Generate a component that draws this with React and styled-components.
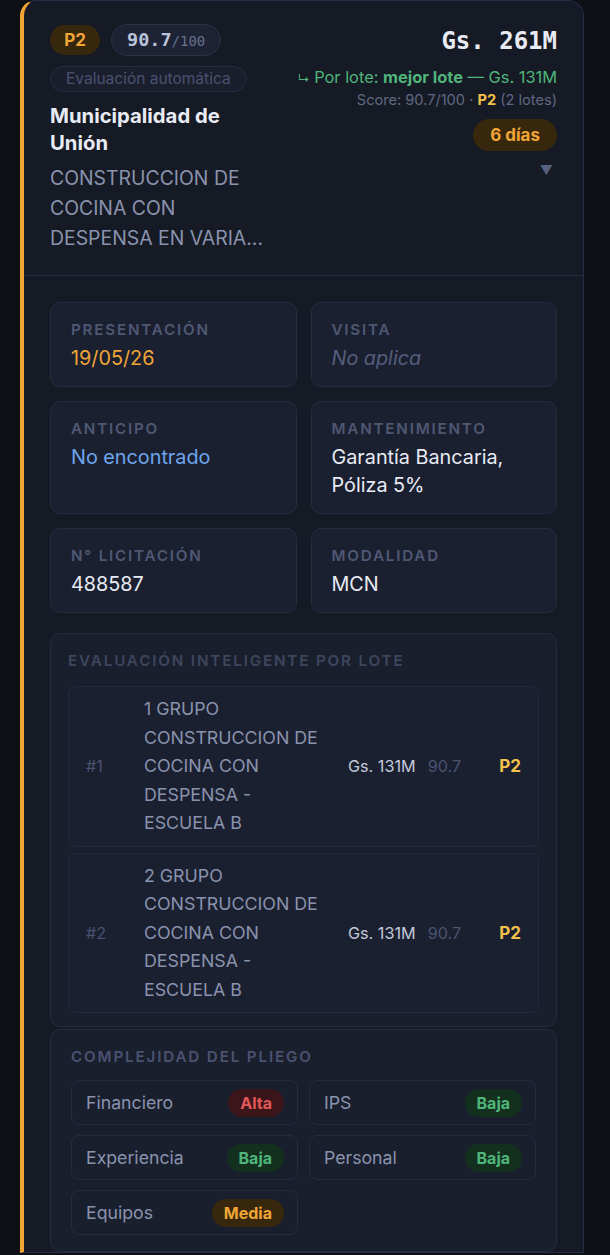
import React from "react";
import styled, { createGlobalStyle } from "styled-components";

const colors = {
  page: "#0f1015",
  card: "#161a25",
  cardBorder: "#262e45",
  box: "#1b2031",
  boxBorder: "#252c40",
  amber: "#f0a535",
  amberBg: "#36270d",
  gold: "#f2c14a",
  green: "#4fb57a",
  greenBg: "#13301f",
  red: "#e25858",
  redBg: "#3a1519",
  blue: "#6ea6ee",
  white: "#e8ebf3",
  text: "#8a93ad",
  muted: "#5f6882",
  dim: "#4a5270",
  faint: "#3e465e",
};

const GlobalStyle = createGlobalStyle`
  body {
    margin: 0;
    background: ${colors.page};
    font-family: Inter, "Noto Sans", sans-serif;
    -webkit-font-smoothing: antialiased;
  }
`;

const details = [
  { label: "Presentación", value: "19/05/26", tone: "amber" },
  { label: "Visita", value: "No aplica", tone: "muted" },
  { label: "Anticipo", value: "No encontrado", tone: "blue" },
  { label: "Mantenimiento", value: "Garantía Bancaria, Póliza 5%" },
  { label: "N° Licitación", value: "488587" },
  { label: "Modalidad", value: "MCN" },
];

const lotes = [
  { n: 1, name: "1 GRUPO CONSTRUCCION DE COCINA CON DESPENSA - ESCUELA B" },
  { n: 2, name: "2 GRUPO CONSTRUCCION DE COCINA CON DESPENSA - ESCUELA B" },
];

const complejidad = [
  { label: "Financiero", level: "Alta" },
  { label: "IPS", level: "Baja" },
  { label: "Experiencia", level: "Baja" },
  { label: "Personal", level: "Baja" },
  { label: "Equipos", level: "Media" },
];

export default function App() {
  return (
    <>
      <GlobalStyle />
      <Card>
        <Header>
          <HeaderLeft>
            <PillRow>
              <PriorityPill>P2</PriorityPill>
              <ScorePill>
                <ScoreValue>90.7</ScoreValue>
                <ScoreMax>/100</ScoreMax>
              </ScorePill>
            </PillRow>
            <AutoPill>Evaluación automática</AutoPill>
            <Entity>Municipalidad de Unión</Entity>
            <Description>CONSTRUCCION DE COCINA CON DESPENSA EN VARIA...</Description>
          </HeaderLeft>
          <HeaderRight>
            <Amount>Gs. 261M</Amount>
            <LoteLine>
              <Arrow>↳</Arrow> Por lote: <strong>mejor lote</strong> — Gs. 131M
            </LoteLine>
            <ScoreLine>
              Score: 90.7/100 · <b>P2</b> (2 lotes)
            </ScoreLine>
            <DaysPill>6 días</DaysPill>
            <Caret>▼</Caret>
          </HeaderRight>
        </Header>

        <Body>
          <DetailGrid>
            {details.map((d) => (
              <DetailBox key={d.label}>
                <Label>{d.label}</Label>
                <Value $tone={d.tone}>{d.value}</Value>
              </DetailBox>
            ))}
          </DetailGrid>

          <LoteSection>
            <SectionTitle $dim>Evaluación inteligente por lote</SectionTitle>
            <LoteList>
              {lotes.map((l) => (
                <LoteRow key={l.n}>
                  <LoteIndex>#{l.n}</LoteIndex>
                  <LoteName>{l.name}</LoteName>
                  <LoteAmount>Gs. 131M</LoteAmount>
                  <LoteScore>90.7</LoteScore>
                  <LotePriority>P2</LotePriority>
                </LoteRow>
              ))}
            </LoteList>
          </LoteSection>

          <ComplexSection>
            <SectionTitle>Complejidad del pliego</SectionTitle>
            <ComplexGrid>
              {complejidad.map((c) => (
                <ComplexItem key={c.label}>
                  <span>{c.label}</span>
                  <LevelBadge $level={c.level}>{c.level}</LevelBadge>
                </ComplexItem>
              ))}
            </ComplexGrid>
          </ComplexSection>
        </Body>
      </Card>
    </>
  );
}

const Card = styled.div`
  margin-left: 20px;
  width: 559px;
  background: ${colors.card};
  border: 1px solid ${colors.cardBorder};
  border-left: 4px solid ${colors.amber};
  border-radius: 16px 16px 0 0;
  overflow: hidden;
`;

const Header = styled.section`
  display: flex;
  justify-content: space-between;
  gap: 16px;
  padding: 23px 26px 22px 26px;
  border-bottom: 1px solid ${colors.cardBorder};
`;

const HeaderLeft = styled.div`
  display: flex;
  flex-direction: column;
  align-items: flex-start;
  width: 218px;
`;

const PillRow = styled.div`
  display: flex;
  align-items: center;
  gap: 11px;
`;

const PriorityPill = styled.span`
  display: inline-flex;
  align-items: center;
  justify-content: center;
  width: 50px;
  height: 30px;
  border-radius: 15px;
  background: ${colors.amberBg};
  color: ${colors.amber};
  font-weight: 700;
  font-size: 17px;
`;

const ScorePill = styled.span`
  display: inline-flex;
  align-items: baseline;
  height: 30px;
  line-height: 30px;
  padding: 0 15px;
  border-radius: 16px;
  background: #1d2334;
  border: 1px solid #293147;
  font-family: "DejaVu Sans Mono", "Liberation Mono", monospace;
`;

const ScoreValue = styled.span`
  color: #b9c2da;
  font-weight: 700;
  font-size: 18.5px;
`;

const ScoreMax = styled.span`
  color: #68718d;
  font-size: 14px;
`;

const AutoPill = styled.span`
  margin-top: 10px;
  height: 24px;
  line-height: 24px;
  padding: 0 15px;
  border-radius: 13px;
  background: #1b1f2d;
  border: 1px solid #262c3e;
  color: ${colors.dim};
  font-size: 15.5px;
  white-space: nowrap;
`;

const Entity = styled.h2`
  margin: 10px 0 0;
  color: ${colors.white};
  font-size: 20.3px;
  font-weight: 700;
  line-height: 27px;
`;

const Description = styled.p`
  margin: 7px 0 0;
  color: ${colors.text};
  font-size: 19.4px;
  line-height: 30px;
`;

const HeaderRight = styled.div`
  display: flex;
  flex-direction: column;
  align-items: flex-end;
  text-align: right;
`;

const Amount = styled.div`
  margin-top: 2px;
  color: ${colors.white};
  font-family: "DejaVu Sans Mono", "Liberation Mono", monospace;
  font-weight: 700;
  font-size: 24px;
  line-height: 30px;
`;

const LoteLine = styled.div`
  margin-top: 10px;
  color: ${colors.green};
  font-size: 16.4px;
  line-height: 22px;
  white-space: nowrap;

  strong {
    font-weight: 700;
  }
`;

const Arrow = styled.span`
  font-size: 12px;
`;

const ScoreLine = styled.div`
  color: ${colors.muted};
  font-size: 14.6px;
  line-height: 21px;
  white-space: nowrap;

  b {
    color: ${colors.gold};
    font-weight: 700;
  }
`;

const DaysPill = styled.span`
  margin-top: 8px;
  height: 32px;
  line-height: 32px;
  padding: 0 17px;
  border-radius: 16px;
  background: ${colors.amberBg};
  color: ${colors.amber};
  font-weight: 700;
  font-size: 17px;
`;

const Caret = styled.span`
  margin-top: 9px;
  margin-right: 4px;
  color: #56617f;
  font-size: 13px;
  line-height: 20px;
`;

const Body = styled.div`
  padding: 26px 26px 0 26px;
`;

const DetailGrid = styled.div`
  display: grid;
  grid-template-columns: 1fr 1fr;
  gap: 14px;
`;

const DetailBox = styled.div`
  padding: 17px 20px 14px;
  background: ${colors.box};
  border: 1px solid ${colors.boxBorder};
  border-radius: 10px;
`;

const Label = styled.div`
  color: #4f5873;
  font-size: 15.2px;
  font-weight: 600;
  letter-spacing: 1.8px;
  text-transform: uppercase;
  line-height: 20px;
`;

const toneColor = {
  amber: colors.amber,
  muted: "#555e7b",
  blue: colors.blue,
};

const Value = styled.div`
  margin-top: 4px;
  color: ${(p) => toneColor[p.$tone] || colors.white};
  font-style: ${(p) => (p.$tone === "muted" ? "italic" : "normal")};
  font-size: 19.8px;
  line-height: 28px;
`;

const LoteSection = styled.section`
  margin-top: 20px;
  padding: 18px 17px 13px;
  background: #1a1f2e;
  border: 1px solid ${colors.boxBorder};
  border-radius: 10px;
`;

const SectionTitle = styled.div`
  margin-bottom: ${(p) => (p.$dim ? "16px" : "14px")};
  color: ${(p) => (p.$dim ? colors.faint : "#4a5270")};
  font-size: 15.2px;
  font-weight: 600;
  letter-spacing: 1.85px;
  text-transform: uppercase;
  line-height: 18px;
`;

const LoteList = styled.div`
  display: flex;
  flex-direction: column;
  gap: 6px;
`;

const LoteRow = styled.div`
  display: grid;
  grid-template-columns: 46px 192px auto auto 1fr;
  column-gap: 12px;
  align-items: center;
  padding: 8px 17px;
  background: ${colors.box};
  border: 1px solid #232a3d;
  border-radius: 8px;
  font-size: 16.2px;
`;

const LoteIndex = styled.span`
  color: ${colors.dim};
`;

const LoteName = styled.span`
  padding-right: 10px;
  color: ${colors.text};
  font-size: 17.8px;
  line-height: 28.5px;
`;

const LoteAmount = styled.span`
  color: #c3c9d8;
`;

const LoteScore = styled.span`
  color: ${colors.dim};
`;

const LotePriority = styled.span`
  justify-self: end;
  color: ${colors.gold};
  font-weight: 700;
  font-size: 17px;
`;

const ComplexSection = styled.section`
  margin-top: 2px;
  padding: 18px 20px 16px;
  background: #1a1f2e;
  border: 1px solid ${colors.boxBorder};
  border-radius: 10px;
`;

const ComplexGrid = styled.div`
  display: grid;
  grid-template-columns: 1fr 1fr;
  gap: 10px 11px;
`;

const ComplexItem = styled.div`
  display: flex;
  align-items: center;
  justify-content: space-between;
  height: 43px;
  padding: 0 13px 0 14px;
  background: #1a1f2e;
  border: 1px solid #252c40;
  border-radius: 8px;
  color: ${colors.text};
  font-size: 17.7px;
`;

const levelStyles = {
  Alta: { bg: colors.redBg, fg: colors.red },
  Baja: { bg: colors.greenBg, fg: colors.green },
  Media: { bg: colors.amberBg, fg: colors.amber },
};

const LevelBadge = styled.span`
  height: 28px;
  line-height: 28px;
  padding: 0 12px;
  border-radius: 14px;
  background: ${(p) => levelStyles[p.$level].bg};
  color: ${(p) => levelStyles[p.$level].fg};
  font-weight: 700;
  font-size: 16px;
`;
